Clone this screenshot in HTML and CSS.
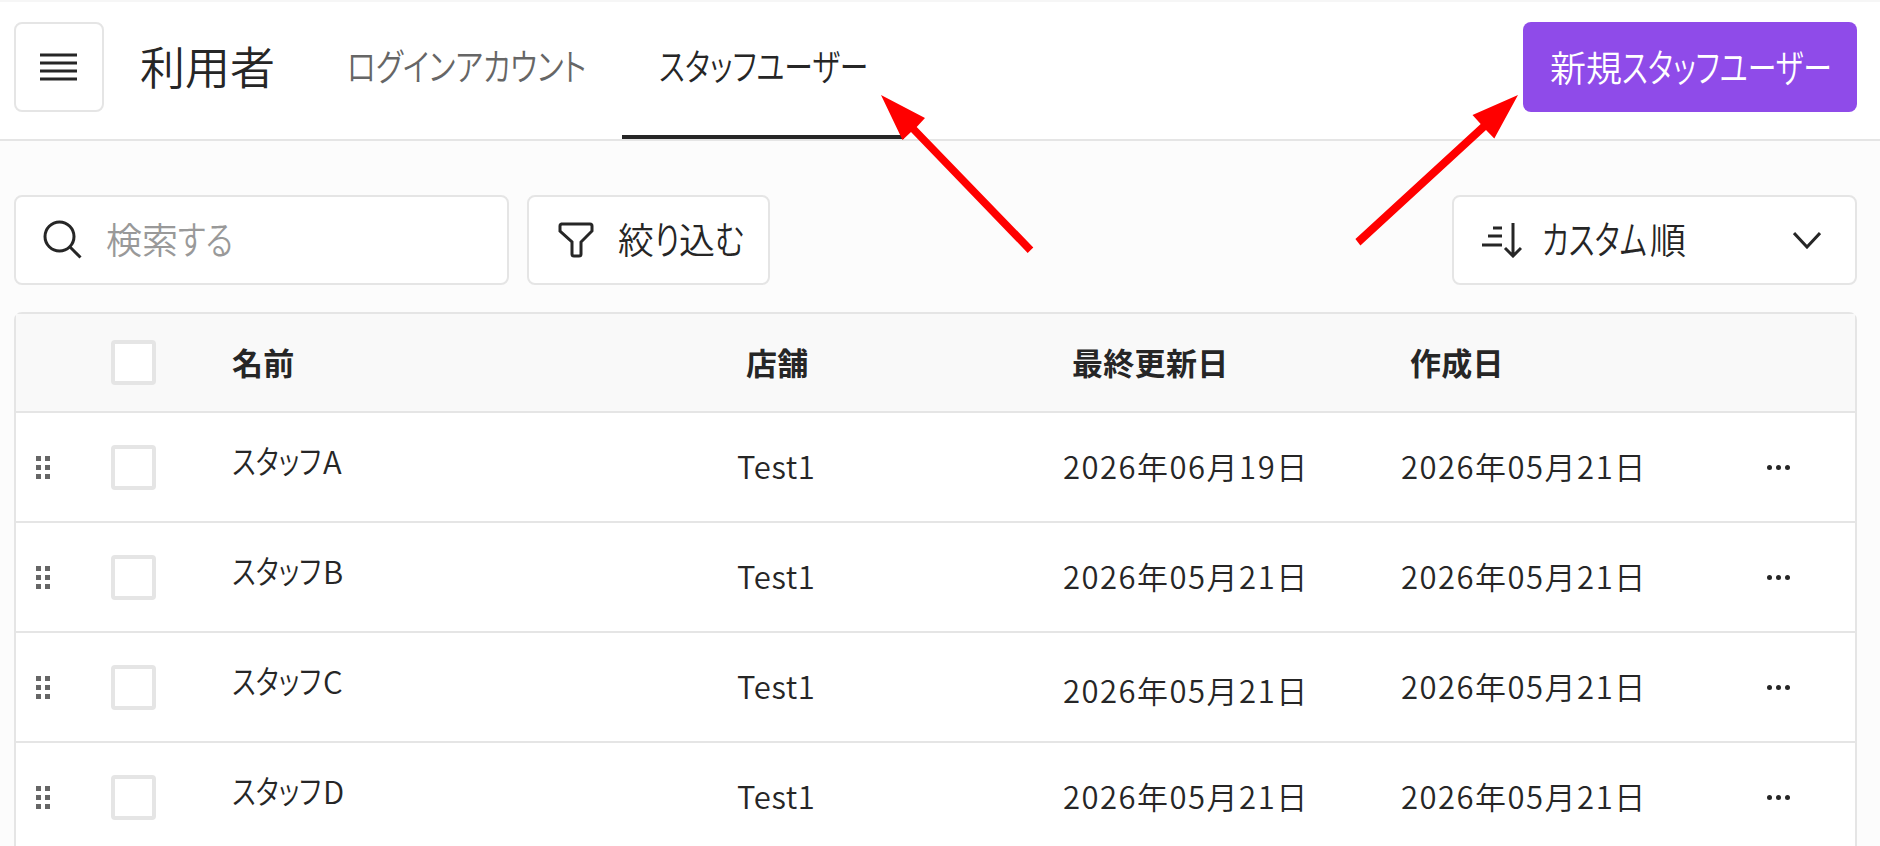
FILE: index.html
```html
<!DOCTYPE html>
<html lang="ja">
<head>
  <meta charset="UTF-8" />
  <title>利用者 - スタッフユーザー</title>
  <link rel="stylesheet" href="styles.css">
</head>
<body>
  <header class="topbar">
    <button class="menu-btn" aria-label="メニュー">
      <svg width="38" height="30" viewBox="0 0 38 30"><path d="M0 3h37M0 11h37M0 19h37M0 27h37" /></svg>
    </button>
    <h1>利用者</h1>
    <nav class="tabs">
      <a class="tab tab-login"><span class="kana">ログインアカウント</span></a>
      <a class="tab tab-staff active"><span class="kana">スタッフユーザー</span></a>
    </nav>
    <button class="new-btn">新規<span class="kana">スタッフユーザー</span></button>
  </header>

  <main>
    <div class="toolbar">
      <div class="box search">
        <svg width="42" height="42" viewBox="0 0 42 42"><circle cx="17.5" cy="17.5" r="14.5" /><path d="M28 28L38.500 38.500" /></svg>
        <span class="placeholder">検索<span class="kana">する</span></span>
      </div>
      <div class="box filter">
        <svg width="36" height="38" viewBox="0 0 36 38"><path d="M3 3h29q2 0 2 2v5L23 21v12q0 2-2 2h-5q-2 0-2-2V21L2 10V5q0-2 2-2z" /></svg>
        <span class="filter-text">絞<span class="kana ri">り</span>込<span class="kana mu">む</span></span>
      </div>
      <div class="box sort">
        <svg width="40" height="36" viewBox="0 0 40 36"><path d="M11 6h9M6 14h14M0 23h20M31 1v32M23 26l8 8 8-8" /></svg>
        <span class="sort-text"><span class="kana">カスタム</span>順</span>
        <svg class="chevron" width="28" height="17" viewBox="0 0 28 17"><path d="M1 1l13 14L27 1" /></svg>
      </div>
    </div>

    <div class="table">
      <div class="row head">
        <div></div>
        <div><span class="check"></span></div>
        <div>名前</div>
        <div class="head-cell">店舗</div>
        <div class="head-cell">最終更新日</div>
        <div class="head-cell">作成日</div>
        <div></div>
      </div>
      <div class="row">
        <div class="drag"><i></i><i></i><i></i><i></i><i></i><i></i></div>
        <div><span class="check"></span></div>
        <div class="name"><span class="kana">スタッフ</span>A</div>
        <div class="store">Test1</div>
        <div class="date">2026年06月19日</div>
        <div class="date">2026年05月21日</div>
        <div class="more"><i></i><i></i><i></i></div>
      </div>
      <div class="row">
        <div class="drag"><i></i><i></i><i></i><i></i><i></i><i></i></div>
        <div><span class="check"></span></div>
        <div class="name"><span class="kana">スタッフ</span>B</div>
        <div class="store">Test1</div>
        <div class="date">2026年05月21日</div>
        <div class="date">2026年05月21日</div>
        <div class="more"><i></i><i></i><i></i></div>
      </div>
      <div class="row">
        <div class="drag"><i></i><i></i><i></i><i></i><i></i><i></i></div>
        <div><span class="check"></span></div>
        <div class="name"><span class="kana">スタッフ</span>C</div>
        <div class="store">Test1</div>
        <div class="date low">2026年05月21日</div>
        <div class="date">2026年05月21日</div>
        <div class="more"><i></i><i></i><i></i></div>
      </div>
      <div class="row">
        <div class="drag"><i></i><i></i><i></i><i></i><i></i><i></i></div>
        <div><span class="check"></span></div>
        <div class="name"><span class="kana">スタッフ</span>D</div>
        <div class="store">Test1</div>
        <div class="date">2026年05月21日</div>
        <div class="date">2026年05月21日</div>
        <div class="more"><i></i><i></i><i></i></div>
      </div>
    </div>
  </main>

  <!-- 赤い矢印 -->
  <svg class="arrows" width="1880" height="846" viewBox="0 0 1880 846">
    <path d="M881 95L925 118L916.700 127L1033.300 247.500L1027.700 253L911 132L902.500 140Z" />
    <path d="M1518 95L1494.300 138.500L1486 130L1360.400 245.500L1355.400 239L1480.700 124L1472.500 115Z" />
  </svg>
</body>
</html>
```
FILE: styles.css
```css
* {
  box-sizing: border-box;
}

body {
  margin: 0;
  height: 846px;
  overflow: hidden;
  background: #fcfcfc;
  color: #262626;
  font-family: "Noto Sans CJK JP", sans-serif;
  font-weight: 350;
  font-size: 31px;
}

svg {
  display: block;
  flex-shrink: 0;
  fill: none;
  stroke: #262626;
  stroke-width: 3;
}

/* 幅の狭いカナ */
.kana {
  display: inline-block;
  white-space: nowrap;
  font-size: 1.06em;
  font-feature-settings: "palt";
  transform: scaleX(0.8);
  transform-origin: left center;
}

.topbar {
  display: flex;
  height: 141px;
  padding: 20px 23px 0 14px;
  background: #fff;
  border-top: 2px solid #f6f6f6;
  border-bottom: 2px solid #e5e5e5;
}

.menu-btn {
  display: flex;
  align-items: center;
  justify-content: center;
  width: 90px;
  height: 90px;
  padding: 0;
  background: #fff;
  border: 2px solid #e5e5e5;
  border-radius: 8px;
}

h1 {
  width: 169px;
  margin: 0 0 0 36px;
  font-size: 45px;
  font-weight: 350;
  line-height: 87px;
}

.tabs {
  display: flex;
  margin-left: 1px;
}

.tab {
  height: 117px;
  padding-left: 37px;
  font-size: 35px;
  line-height: 86px;
  color: #666;
}

.tab-login {
  width: 312px;
}

.tab-staff {
  width: 282px;
}

.tab-staff .kana {
  transform: scaleX(0.775);
}

.tab.active {
  color: #262626;
  border-bottom: 4px solid #262626;
}

.new-btn {
  width: 334px;
  height: 90px;
  margin-left: auto;
  padding: 0 0 4px 27px;
  overflow: hidden;
  text-align: left;
  white-space: nowrap;
  color: #fff;
  background: #8f4be9;
  border: none;
  border-radius: 8px;
  font-family: inherit;
  font-size: 36px;
  font-weight: 350;
}

.new-btn .kana {
  transform: scaleX(0.755);
}

main {
  padding: 54px 23px 0 14px;
}

.toolbar {
  display: flex;
  gap: 18px;
}

.box {
  display: flex;
  align-items: center;
  height: 90px;
  background: #fff;
  border: 2px solid #e5e5e5;
  border-radius: 8px;
  font-size: 36px;
  line-height: 82px;
}

.box > span {
  padding-bottom: 4px;
  white-space: nowrap;
}

.search {
  width: 495px;
  padding-left: 26px;
  gap: 22px;
}

.placeholder {
  color: #999;
}

.filter {
  width: 243px;
  padding-left: 29px;
  gap: 24px;
}

.ri {
  width: 25px;
}

.mu {
  width: 30px;
}

.sort {
  width: 405px;
  margin-left: auto;
  padding: 0 34px 0 28px;
  gap: 20px;
}

.sort .kana {
  width: 108px;
  transform: scaleX(0.755);
}

.chevron {
  margin-left: auto;
}

.table {
  margin-top: 27px;
  background: #fff;
  border: 2px solid #e5e5e5;
  border-radius: 8px 8px 0 0;
}

.row {
  display: grid;
  grid-template-columns: 95px 121px 505px 326px 338px 364px 1fr;
  align-items: center;
  height: 110px;
  border-bottom: 2px solid #e5e5e5;
}

.head {
  height: 99px;
  background: #f9f9f9;
  font-weight: 600;
  line-height: 44px;
}

.head > div {
  padding-bottom: 2px;
  letter-spacing: 0.3px;
}

.head > .head-cell {
  padding-left: 9px;
}

.check {
  display: block;
  width: 45px;
  height: 45px;
  background: #fff;
  border: 4px solid #e5e5e5;
  border-radius: 4px;
}

.head .check {
  margin-top: 2px;
}

.drag {
  display: grid;
  grid-template-columns: 5px 5px;
  gap: 4px;
  padding: 0 0 0 20px;
}

.drag i {
  height: 5px;
  background: #666;
}

.name {
  padding-bottom: 15px;
}

.name .kana {
  width: 91px;
}

.store {
  padding-bottom: 4px;
  letter-spacing: 0.6px;
}

.date {
  padding-bottom: 4px;
  letter-spacing: 1.5px;
}

.date.low {
  padding: 5px 0 0;
}

.more {
  display: flex;
  gap: 4px;
  padding-left: 2px;
}

.more i {
  width: 5px;
  height: 5px;
  border-radius: 50%;
  background: #262626;
}

.arrows {
  position: absolute;
  top: 0;
  left: 0;
  fill: #f00;
  stroke: none;
  pointer-events: none;
}
```
